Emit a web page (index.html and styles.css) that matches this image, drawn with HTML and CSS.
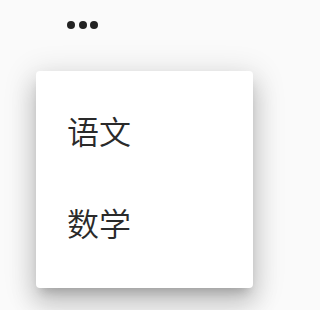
FILE: index.html
```html
<!DOCTYPE html>
<html lang="zh">
<head>
<meta charset="utf-8">
<link rel="stylesheet" href="styles.css">
</head>
<body>
<div class="page">
  <div class="trigger">
    <span class="dot"></span><span class="dot"></span><span class="dot"></span>
  </div>
  <div class="menu">
    <div class="item">语文</div>
    <div class="item">数学</div>
  </div>
</div>
</body>
</html>
```
FILE: styles.css
```css
html, body {
  margin: 0;
  padding: 0;
  background: #fafafa;
}
.page {
  width: 298px;
  height: 310px;
  overflow: hidden;
  font-family: "Noto Sans CJK SC", "Noto Sans", sans-serif;
}
.trigger {
  display: flex;
  gap: 3.5px;
  padding: 21px 0 0 67px;
  height: 8px;
}
.dot {
  width: 8px;
  height: 8px;
  border-radius: 50%;
  background: #222;
}
.menu {
  margin: 42px 0 0 36px;
  width: 217px;
  height: 217px;
  box-sizing: border-box;
  padding: 13px 0 20px;
  background: #fff;
  border-radius: 4px;
  box-shadow: 0 8px 10px -5px rgba(0,0,0,.2), 0 16px 24px 2px rgba(0,0,0,.14), 0 6px 30px 5px rgba(0,0,0,.12);
}
.item {
  height: 92px;
  display: flex;
  align-items: center;
  padding-left: 31px;
  font-size: 32px;
  font-weight: 350;
  color: #2a2a2a;
}
```
